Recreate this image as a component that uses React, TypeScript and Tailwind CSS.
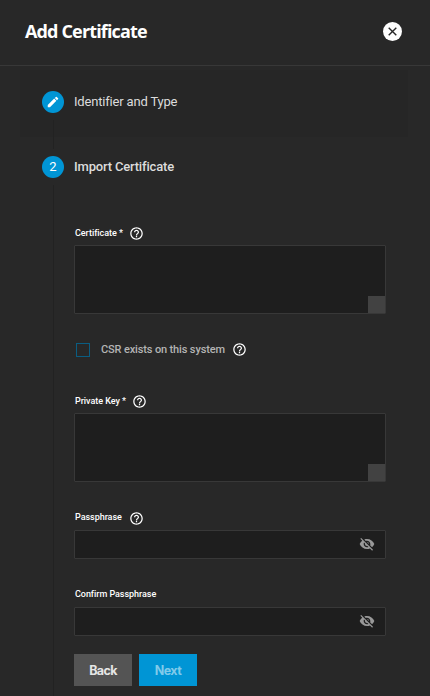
import { MdEdit, MdHelpOutline, MdVisibilityOff } from "react-icons/md";

function Label({ text, help, width, lowered }: { text: string; help?: boolean; width: number; lowered?: boolean }) {
  return (
    <div className="flex h-4 items-center whitespace-nowrap pl-px text-[9px] font-medium tracking-[-0.04px] text-white">
      <span style={{ width }} className={lowered ? "pt-[2px]" : ""}>{text}</span>
      {help && <MdHelpOutline className="size-[15px]" />}
    </div>
  );
}

function TextArea() {
  return (
    <div className="flex h-[69px] items-end justify-end rounded-[1px] border border-[#383838] bg-[#1e1e1e]">
      <div className="size-[17px] bg-[#424242]" />
    </div>
  );
}

function PasswordInput() {
  return (
    <div className="flex h-[29px] items-center justify-end rounded-[1px] border border-[#383838] bg-[#1e1e1e] pr-[10px]">
      <MdVisibilityOff className="mb-px size-4 text-[#999]" />
    </div>
  );
}

function CloseIcon() {
  return (
    <svg viewBox="0 0 19 19" className="mr-[2px] size-[19px]">
      <circle cx="9.5" cy="9.5" r="9.5" fill="#fff" />
      <path d="M5.7 5.7l7.6 7.6M13.3 5.7l-7.6 7.6" stroke="#282828" strokeWidth="1.4" />
    </svg>
  );
}

export default function App() {
  return (
    <div className="h-[696px] w-[430px] overflow-hidden bg-[#282828] font-['Roboto',sans-serif]">
      <header className="flex h-[66px] items-center justify-between border-b border-[#383838] pl-[25px] pr-[26px] pb-[3px]">
        <h1 className="font-['Open_Sans',sans-serif] text-[18px] font-bold tracking-[-0.85px] text-white">Add Certificate</h1>
        <CloseIcon />
      </header>
      <div className="ml-5 mt-1 flex h-[67px] w-[388px] bg-[#262626] pl-[22px]">
        <div className="w-8 pt-[21px]">
          <div className="flex size-[22px] items-center justify-center rounded-full bg-[#0095d5] text-white">
            <MdEdit className="size-[14px]" />
          </div>
          <div className="ml-[11px] mt-[7px] h-[17px] w-px bg-[#222]" />
        </div>
        <span className="mt-[22px] text-[13px] leading-5 tracking-[-0.18px] text-[#dcdcdc]">Identifier and Type</span>
      </div>
      <div className="flex pl-[42px]">
        <div className="w-8">
          <div className="ml-[11px] h-3 w-px bg-[#222]" />
          <div className="mt-[7px] flex size-[22px] items-center justify-center rounded-full bg-[#0095d5] text-[13px] text-white">2</div>
          <div className="ml-[11px] mt-[7px] h-[511px] w-px bg-[#222]" />
        </div>
        <main className="w-[312px] pt-5">
          <h2 className="h-5 text-[13px] font-medium leading-5 tracking-[-0.18px] text-[#dcdcdc]">Import Certificate</h2>
          <div className="mt-12">
            <Label text="Certificate *" width={54} help lowered />
            <div className="mt-1"><TextArea /></div>
          </div>
          <div className="mt-[27px] flex h-4 items-center text-[11px] font-medium tracking-[-0.14px] text-[#b4b4b4]">
            <div className="ml-[2px] mt-[2px] size-[14px] border border-[#0a5d82]" />
            <span className="ml-[11px] mt-[2px] w-[131px] whitespace-nowrap">CSR exists on this system</span>
            <MdHelpOutline className="size-[15px] text-white" />
          </div>
          <div className="mt-9">
            <Label text="Private Key *" width={57} help lowered />
            <div className="mt-1"><TextArea /></div>
          </div>
          <div className="mt-7">
            <Label text="Passphrase" width={54} help />
            <div className="mt-1"><PasswordInput /></div>
          </div>
          <div className="mt-7">
            <Label text="Confirm Passphrase" width={90} />
            <div className="mt-1"><PasswordInput /></div>
          </div>
          <div className="mt-[18px] flex gap-[7px] font-['Inter',sans-serif] text-[12.5px] font-bold tracking-[-0.6px]">
            <button className="h-8 w-[58px] bg-[#545454] pt-[2px] text-[#e6e6e6]">Back</button>
            <button className="h-8 w-[58px] bg-[#0095d5] pt-[2px] text-[#80caea]">Next</button>
          </div>
        </main>
      </div>
    </div>
  );
}
